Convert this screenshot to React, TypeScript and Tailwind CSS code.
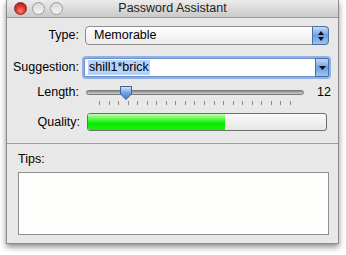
import React from "react";

const font = { fontFamily: '"Lucida Grande", "Liberation Sans", Arial, sans-serif' };

const Light = ({ color }: { color: "red" | "grey" }) => (
  <span
    className={
      color === "red"
        ? "block w-[13px] h-[13px] rounded-full border border-[#8a2b22] bg-[radial-gradient(circle_at_50%_70%,#ff8a7a_0%,#e0382a_45%,#9c1a10_100%)]"
        : "block w-[13px] h-[13px] rounded-full border border-[#9a9a9a] bg-[linear-gradient(#d8d8d8,#f4f4f4)]"
    }
  />
);

const Label = ({ children }: { children: React.ReactNode }) => (
  <div className="w-[78px] text-right pr-[6px] text-[12.5px] text-black leading-none">{children}</div>
);

const App = () => {
  const ticks = Array.from({ length: 21 });
  return (
    <div className="w-[346px] h-[255px] bg-white pt-0 pl-[6px]" style={font}>
      <div className="w-[333px] h-[244px] bg-[#e8e8e8] border-x border-b border-[#8c8c8c] shadow-[0_3px_6px_rgba(0,0,0,0.45)] flex flex-col">
        {/* title bar */}
        <div className="h-[18px] flex items-center bg-[linear-gradient(#ececec,#c9c9c9)] border-b border-[#979797] relative">
          <div className="flex gap-[5px] pl-[7px]">
            <Light color="red" />
            <Light color="grey" />
            <Light color="grey" />
          </div>
          <div className="absolute inset-0 flex items-center justify-center text-[12.5px] text-[#222]">
            Password Assistant
          </div>
        </div>

        {/* form */}
        <div className="flex flex-col pt-[8px]">
          <div className="flex items-center h-[19px]">
            <Label>Type:</Label>
            <div className="w-[244px] h-[19px] rounded-[4px] border border-[#8e8e8e] bg-[linear-gradient(#ffffff,#ececec)] flex items-center relative">
              <span className="pl-[8px] text-[12.5px]">Memorable</span>
              <div className="absolute right-[-1px] top-[-1px] w-[17px] h-[19px] rounded-r-[4px] border border-[#4a6ea8] bg-[linear-gradient(#c4dbf7,#6e9fe0_50%,#9cc4f2)] flex flex-col items-center justify-center gap-[2px]">
                <svg width="6" height="4" viewBox="0 0 6 4"><path d="M0 4L3 0L6 4Z" fill="#111" /></svg>
                <svg width="6" height="4" viewBox="0 0 6 4"><path d="M0 0L3 4L6 0Z" fill="#111" /></svg>
              </div>
            </div>
          </div>

          <div className="flex items-center h-[19px] mt-[13px]">
            <div className="w-[77px] text-right pr-[5px] text-[12.5px] leading-none">Suggestion:</div>
            <div className="w-[245px] h-[19px] border border-[#6f8fc4] bg-white shadow-[0_0_0_2px_#8fb2e6] rounded-[2px] flex items-center relative">
              <span className="ml-[3px] bg-[#b5d3f8] text-[12.5px] px-[1px] leading-[15px]">shill1*brick</span>
              <div className="absolute right-[-1px] top-[-1px] w-[14px] h-[19px] border border-[#4a6ea8] bg-[linear-gradient(#c4dbf7,#6e9fe0_50%,#9cc4f2)] flex items-center justify-center rounded-r-[2px]">
                <svg width="7" height="4" viewBox="0 0 7 4"><path d="M0 0L3.5 4L7 0Z" fill="#111" /></svg>
              </div>
            </div>
          </div>

          <div className="flex items-start mt-[7px]">
            <div className="pt-[2px]"><Label>Length:</Label></div>
            <div className="w-[218px] ml-[1px] flex flex-col relative">
              <div className="h-[5px] mt-[6px] rounded-full bg-[linear-gradient(#8a8a8a,#d0d0d0)] border border-[#7a7a7a]" />
              <div className="absolute left-[33px] top-[1px]">
                <svg width="14" height="16" viewBox="0 0 14 16">
                  <defs>
                    <linearGradient id="th" x1="0" y1="0" x2="0" y2="1">
                      <stop offset="0" stopColor="#d6e6fb" />
                      <stop offset="0.5" stopColor="#6fa3e6" />
                      <stop offset="1" stopColor="#3b78d0" />
                    </linearGradient>
                  </defs>
                  <path d="M1.5 1.5H12.5V9L7 14.5L1.5 9Z" fill="url(#th)" stroke="#3d5f94" strokeWidth="1" />
                </svg>
              </div>
              <div className="flex justify-between px-[13px] mt-[6px]">
                {ticks.map((_, i) => (
                  <span key={i} className="block w-px h-[4px] bg-[#8a8a8a]" />
                ))}
              </div>
            </div>
            <div className="ml-[13px] pt-[2px] text-[12.5px] leading-none">12</div>
          </div>

          <div className="flex items-center mt-[8px]">
            <div className="w-[80px] text-right pr-[7px] text-[12.5px] leading-none">Quality:</div>
            <div className="w-[240px] h-[18px] rounded-[3px] border border-[#6e6e6e] bg-[linear-gradient(#fafafa,#e6e6e6)] overflow-hidden flex">
              <div className="w-[137px] h-full bg-[linear-gradient(#c2ffb4,#3cf82a_40%,#08e800_60%,#22f010)]" />
            </div>
          </div>
        </div>

        <div className="mt-[12px] border-t border-[#a0a0a0]" />

        <div className="pl-[11px] pt-[9px] text-[12.5px] leading-none">Tips:</div>
        <div className="ml-[11px] mt-[6px] w-[311px] h-[63px] border border-[#8f8f8f] bg-[#fefefc]" />
      </div>
    </div>
  );
};

export default App;
